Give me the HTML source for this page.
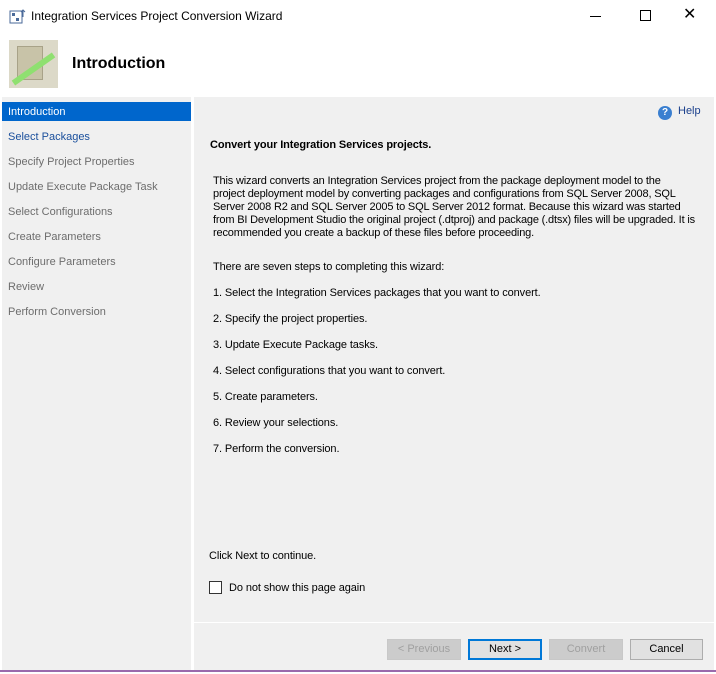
<!DOCTYPE html>
<html><head><style>
*{margin:0;padding:0;box-sizing:border-box}
body{width:716px;height:674px;background:#fff;font-family:"Liberation Sans",sans-serif;font-size:11px;color:#000;position:relative;overflow:hidden}
.a{position:absolute}
.nav div{position:absolute;left:2px;width:189px;height:19px;padding-left:6px;line-height:20px;color:#6d6d6d;font-size:11px}
.p{position:absolute;left:213px;width:500px;font-size:11px;line-height:13px;color:#000;white-space:nowrap;letter-spacing:-0.1px}
.btn{position:absolute;top:639px;height:21px;width:74px;border:1px solid #adadad;background:#e1e1e1;text-align:center;line-height:19px;font-size:11px}
</style></head><body>
<svg class="a" style="left:9px;top:8px" width="18" height="18" viewBox="0 0 18 18"><rect x="1" y="3" width="12" height="12" fill="#fff" stroke="#4a6a9a"/><rect x="3" y="5" width="3" height="3" fill="#4a6a9a"/><rect x="7" y="10" width="3" height="3" fill="#4a6a9a"/><path d="M14 9V2M12 4l2-2 2 2" stroke="#4a6a9a" fill="none"/></svg>
<div class="a" style="left:31px;top:9px;font-size:12px;color:#000">Integration Services Project Conversion Wizard</div>
<div class="a" style="left:590px;top:16px;width:11px;height:1px;background:#000"></div>
<div class="a" style="left:640px;top:10px;width:11px;height:11px;border:1px solid #000"></div>
<div class="a" style="left:683px;top:4px;font-size:16px">✕</div>
<div class="a" style="left:9px;top:40px;width:49px;height:48px;background:#dcd9c8"></div>
<div class="a" style="left:17px;top:46px;width:26px;height:34px;background:#c8c3a8;border:1px solid #a8a288"></div>
<div class="a" style="left:9px;top:66px;width:49px;height:6px;background:#8fe070;transform:rotate(-35deg)"></div>
<div class="a" style="left:72px;top:55px;font-size:16px;font-weight:bold">Introduction</div>
<div class="a" style="left:2px;top:97px;width:189px;height:573px;background:#f0f0f0"></div>
<div class="a" style="left:194px;top:97px;width:520px;height:574px;background:#f0f0f0"></div>
<div class="a" style="left:194px;top:622px;width:520px;height:1px;background:#fff"></div>
<div class="a" style="left:0;top:670px;width:716px;height:2px;background:#9a6aac"></div>
<div class="nav">
<div style="top:102px;background:#0066cc;color:#fff">Introduction</div>
<div style="top:127px;color:#1a4f9c">Select Packages</div>
<div style="top:152px">Specify Project Properties</div>
<div style="top:177px">Update Execute Package Task</div>
<div style="top:202px">Select Configurations</div>
<div style="top:227px">Create Parameters</div>
<div style="top:252px">Configure Parameters</div>
<div style="top:277px">Review</div>
<div style="top:302px">Perform Conversion</div>
</div>
<div class="a" style="left:658px;top:106px;width:14px;height:14px;border-radius:50%;background:#3a7fd0;color:#fff;font-size:10px;font-weight:bold;text-align:center;line-height:14px">?</div>
<div class="a" style="left:678px;top:105px;color:#1a3f8c;font-size:11px">Help</div>
<div class="p" style="top:139px;left:210px;font-weight:bold;font-size:11px;letter-spacing:-0.1px">Convert your Integration Services projects.</div>
<div class="p" style="top:175px;letter-spacing:-0.17px">This wizard converts an Integration Services project from the package deployment model to the<br>project deployment model by converting packages and configurations from SQL Server 2008, SQL<br>Server 2008 R2 and SQL Server 2005 to SQL Server 2012 format. Because this wizard was started<br>from BI Development Studio the original project (.dtproj) and package (.dtsx) files will be upgraded. It is<br>recommended you create a backup of these files before proceeding.</div>
<div class="p" style="top:261px">There are seven steps to completing this wizard:</div>
<div class="p" style="top:287px">1. Select the Integration Services packages that you want to convert.</div>
<div class="p" style="top:313px">2. Specify the project properties.</div>
<div class="p" style="top:339px">3. Update Execute Package tasks.</div>
<div class="p" style="top:365px">4. Select configurations that you want to convert.</div>
<div class="p" style="top:391px">5. Create parameters.</div>
<div class="p" style="top:417px">6. Review your selections.</div>
<div class="p" style="top:443px">7. Perform the conversion.</div>
<div class="p" style="top:550px;left:209px">Click Next to continue.</div>
<div class="a" style="left:209px;top:581px;width:13px;height:13px;border:1px solid #333;background:#fff"></div>
<div class="a" style="left:229px;top:582px;letter-spacing:-0.1px">Do not show this page again</div>
<div class="btn" style="left:387px;width:74px;color:#a0a0a0;border-color:#c8c8c8;background:#ccc">&lt; Previous</div>
<div class="btn" style="left:468px;border:2px solid #0078d7;line-height:17px">Next &gt;</div>
<div class="btn" style="left:549px;color:#a0a0a0;border-color:#c8c8c8;background:#ccc">Convert</div>
<div class="btn" style="left:630px;width:73px">Cancel</div>
</body></html>
